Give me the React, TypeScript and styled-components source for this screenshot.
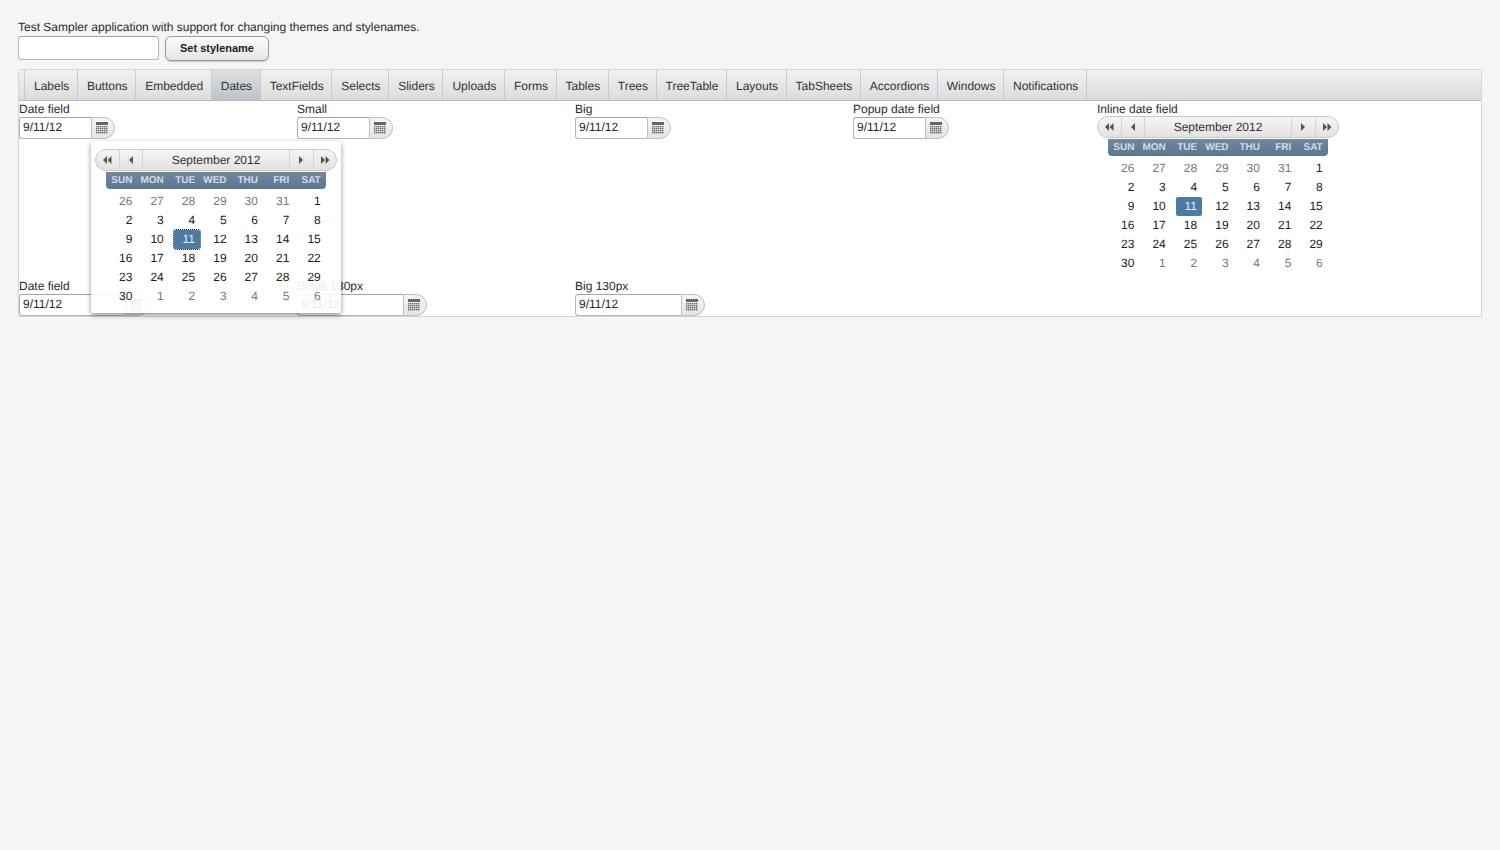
import styled, { createGlobalStyle } from "styled-components";

const GlobalStyle = createGlobalStyle`
    html, body {
        margin: 0;
        padding: 0;
        height: 100%;
        background: #f5f5f5;
    }
    body {
        font-family: "Liberation Sans", Arial, sans-serif;
        font-size: 12px;
        color: #2a2a2a;
        text-rendering: geometricPrecision;
    }
`;

const Page = styled.div`
    position: relative;
    height: 850px;
    padding: 21px 18px 0;
    box-sizing: border-box;
`;

const Intro = styled.div`
    height: 15px;
    line-height: 13px;
    font-size: 12px;
`;

const StyleRow = styled.div`
    display: flex;
    gap: 6px;
    height: 33px;
`;

const StyleInput = styled.input`
    width: 141px;
    height: 24px;
    box-sizing: border-box;
    border: 1px solid #b6b6b6;
    border-top-color: #a4a4a4;
    border-radius: 3px;
    background: #fff;
    padding: 0 4px;
`;

const StyleButton = styled.button`
    width: 104px;
    height: 25px;
    padding: 0 0 2px;
    border: 1px solid #9a9a9a;
    border-radius: 6px;
    background: linear-gradient(#fbfbfb, #e6e6e6);
    box-shadow: 0 1px 1px rgba(0, 0, 0, 0.2);
    font: bold 11px "Liberation Sans", Arial, sans-serif;
    color: #222;
`;

const Sheet = styled.div`
    width: 1464px;
    height: 248px;
    box-sizing: border-box;
    border: 1px solid #d4d4d4;
    border-radius: 3px 3px 0 0;
    background: #fff;
`;

const TabBar = styled.div`
    display: flex;
    height: 31px;
    box-sizing: border-box;
    padding-left: 5px;
    background: linear-gradient(#f1f1f1, #dcdcdc);
    border-bottom: 1px solid #b9b9b9;
`;

const Tab = styled.div<{ $active?: boolean }>`
    display: flex;
    align-items: center;
    padding: 2px 7.56px 0 9px;
    border-left: 1px solid #c9c9c9;
    background: ${p => (p.$active ? "linear-gradient(#dde1e4, #bcc3c9)" : "transparent")};
    white-space: nowrap;
    color: #333;

    &:last-child {
        border-right: 1px solid #c9c9c9;
    }
`;

const FieldGrid = styled.div`
    display: grid;
    grid-template-columns: 278px 278px 278px 244px 1fr;
    grid-template-rows: 177px 36px;
    padding-top: 2px;
`;

const Field = styled.div`
    display: flex;
    flex-direction: column;
    align-items: flex-start;
`;

const Caption = styled.div`
    height: 14px;
    line-height: 13px;
    white-space: nowrap;
`;

const InlineCaption = styled(Caption)`
    height: 13px;
`;

const DateBox = styled.div`
    display: flex;
    height: 22px;
`;

const DateInput = styled.div<{ $wide?: boolean }>`
    width: ${p => (p.$wide ? 106 : 72)}px;
    box-sizing: border-box;
    border: 1px solid #b6b6b6;
    border-top-color: #a4a4a4;
    border-right: none;
    border-radius: 3px 0 0 3px;
    background: #fff;
    padding-left: 3px;
    line-height: 18px;
`;

const DateButton = styled.div`
    width: 24px;
    box-sizing: border-box;
    display: flex;
    align-items: center;
    justify-content: center;
    padding-right: 2px;
    border: 1px solid #c0c0c0;
    border-radius: 0 11px 11px 0;
    background: linear-gradient(#f6f6f6, #e4e4e4);
`;

const Calendar = styled.div`
    width: 242px;
`;

const NavBar = styled.div`
    display: flex;
    height: 22px;
    box-sizing: border-box;
    border: 1px solid #c8c8c8;
    border-radius: 11px;
    background: linear-gradient(#f5f5f5, #e2e2e2);
    overflow: hidden;
`;

const NavButton = styled.div<{ $side: "left" | "right" }>`
    width: 23.5px;
    display: flex;
    align-items: center;
    justify-content: center;
    border-${p => (p.$side === "left" ? "right" : "left")}: 1px solid #d4d4d4;
    box-sizing: border-box;
`;

const NavTitle = styled.div`
    flex: 1;
    text-align: center;
    line-height: 20px;
    color: #333;
`;

const WeekBar = styled.div`
    display: grid;
    grid-template-columns: repeat(7, 31.4px);
    width: 220px;
    height: 17px;
    margin: 1px 0 0 11px;
    border-radius: 0 0 4px 4px;
    background: linear-gradient(#6f879f, #5d7690);
`;

const WeekDay = styled.div`
    text-align: right;
    padding-right: 5px;
    font-size: 10px;
    font-weight: bold;
    line-height: 17px;
    color: #d3dde6;
`;

const DayGrid = styled.div`
    display: grid;
    grid-template-columns: repeat(7, 31.4px);
    grid-auto-rows: 19px;
    width: 220px;
    margin: 3px 0 0 11px;
`;

const Day = styled.div<{ $muted?: boolean; $selected?: boolean; $focused?: boolean }>`
    text-align: right;
    padding-right: ${p => (p.$selected ? 0 : 5)}px;
    line-height: 18px;
    color: ${p => (p.$muted ? "#777" : "#222")};

    ${p =>
        p.$selected &&
        `
        display: flex;
        justify-content: center;
        width: 26px;
        margin-left: 5px;
        padding-left: 4px;
        box-sizing: border-box;
        background: #4d7aa3;
        color: #e8eef3;
        border-radius: 2px;
    `}

    ${p => p.$focused && `outline: 1px dotted #111; outline-offset: 0;`}
`;

const Popup = styled.div`
    position: absolute;
    left: 91px;
    top: 141px;
    width: 250px;
    height: 172px;
    box-sizing: border-box;
    padding: 8px 4px 0;
    background: rgba(255, 255, 255, 0.9);
    border-radius: 3px;
    box-shadow: 0 2px 5px rgba(0, 0, 0, 0.45);
`;

const tabs = [
    "Labels", "Buttons", "Embedded", "Dates", "TextFields", "Selects", "Sliders", "Uploads", "Forms",
    "Tables", "Trees", "TreeTable", "Layouts", "TabSheets", "Accordions", "Windows", "Notifications",
];

const weekDays = ["SUN", "MON", "TUE", "WED", "THU", "FRI", "SAT"];

const days: { n: number; muted?: boolean }[] = [
    ...[26, 27, 28, 29, 30, 31].map(n => ({ n, muted: true })),
    ...Array.from({ length: 30 }, (_, i) => ({ n: i + 1 })),
    ...[1, 2, 3, 4, 5, 6].map(n => ({ n, muted: true })),
];

function CalendarIcon() {
    return (
        <svg width="12" height="12" viewBox="0 0 12 12">
            <rect x="0" y="0" width="12" height="3" fill="#666" />
            {[4, 6, 8, 10].map(y =>
                [0, 2, 4, 6, 8, 10].map(x => <rect key={`${x}-${y}`} x={x} y={y} width="1.4" height="1.4" fill="#666" />)
            )}
        </svg>
    );
}

function Arrow({ dir, double }: { dir: "left" | "right"; double?: boolean }) {
    const first = dir === "left" ? "M5 0 L5 8 L1 4 Z" : "M1 0 L1 8 L5 4 Z";
    const second = dir === "left" ? "M9.5 0 L9.5 8 L5.5 4 Z" : "M5.5 0 L5.5 8 L9.5 4 Z";
    return (
        <svg width={double ? 10 : 6} height="8" viewBox={`0 0 ${double ? 10 : 6} 8`}>
            <path d={first} fill="#555" />
            {double && <path d={second} fill="#555" />}
        </svg>
    );
}

function MonthCalendar({ focused }: { focused?: boolean }) {
    return (
        <Calendar>
            <NavBar>
                <NavButton $side="left"><Arrow dir="left" double /></NavButton>
                <NavButton $side="left"><Arrow dir="left" /></NavButton>
                <NavTitle>September 2012</NavTitle>
                <NavButton $side="right"><Arrow dir="right" /></NavButton>
                <NavButton $side="right"><Arrow dir="right" double /></NavButton>
            </NavBar>
            <WeekBar>
                {weekDays.map(d => <WeekDay key={d}>{d}</WeekDay>)}
            </WeekBar>
            <DayGrid>
                {days.map((d, i) => (
                    <Day
                        key={i}
                        $muted={d.muted}
                        $selected={!d.muted && d.n === 11}
                        $focused={focused && !d.muted && d.n === 11}
                    >
                        {d.n}
                    </Day>
                ))}
            </DayGrid>
        </Calendar>
    );
}

function DateField({ label, wide }: { label: string; wide?: boolean }) {
    return (
        <Field>
            <Caption>{label}</Caption>
            <DateBox>
                <DateInput $wide={wide}>9/11/12</DateInput>
                <DateButton><CalendarIcon /></DateButton>
            </DateBox>
        </Field>
    );
}

export default function App() {
    return (
        <Page>
            <GlobalStyle />
            <Intro>Test Sampler application with support for changing themes and stylenames.</Intro>
            <StyleRow>
                <StyleInput />
                <StyleButton>Set stylename</StyleButton>
            </StyleRow>
            <Sheet>
                <TabBar>
                    {tabs.map(t => <Tab key={t} $active={t === "Dates"}>{t}</Tab>)}
                </TabBar>
                <FieldGrid>
                    <DateField label="Date field" />
                    <DateField label="Small" />
                    <DateField label="Big" />
                    <DateField label="Popup date field" />
                    <Field>
                        <InlineCaption>Inline date field</InlineCaption>
                        <MonthCalendar />
                    </Field>
                    <DateField label="Date field" wide />
                    <DateField label="Small 130px" wide />
                    <DateField label="Big 130px" wide />
                </FieldGrid>
            </Sheet>
            <Popup>
                <MonthCalendar focused />
            </Popup>
        </Page>
    );
}
